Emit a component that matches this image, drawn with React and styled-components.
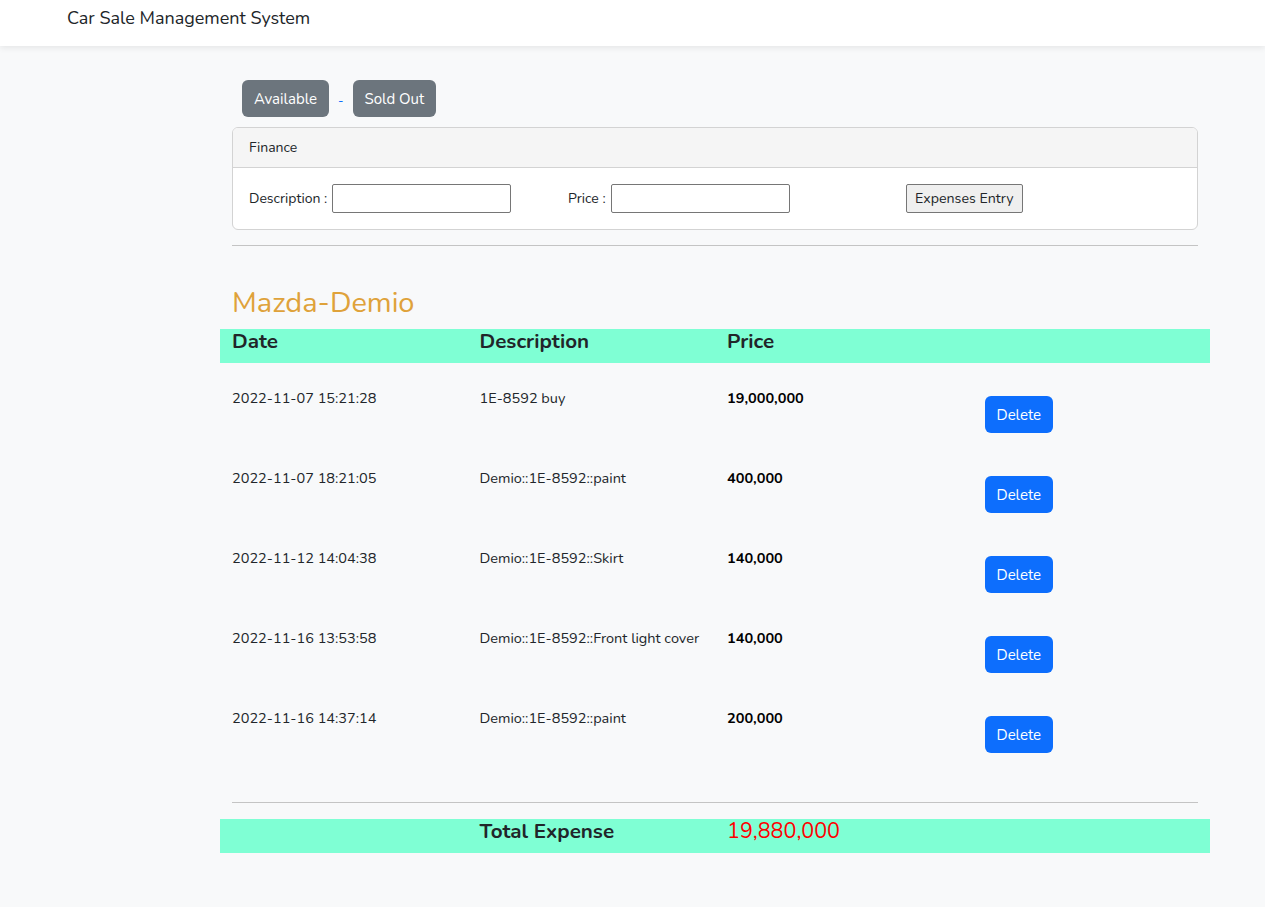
import styled, { createGlobalStyle } from "styled-components";

const GlobalStyle = createGlobalStyle`
  body {
    margin: 0;
    background: #f8f9fa;
    font-family: "Nunito", Lato, "Noto Sans", sans-serif;
    color: #212529;
  }
`;

const Navbar = styled.nav`
  height: 46px;
  background: #fff;
  box-shadow: 0 2px 6px rgba(0, 0, 0, 0.08);
  display: flex;
  align-items: center;
  padding-left: 67px;
`;

const Brand = styled.div`
  font-size: 18px;
  color: #212529;
  margin-top: -10px;
`;

const Container = styled.div`
  width: 990px;
  margin-left: 220px;
  padding-top: 34px;
`;

const Inner = styled.div`
  padding: 0 12px;
`;

const StatusBar = styled.div`
  display: flex;
  align-items: center;
  padding-left: 10px;
  height: 37px;
`;

const StatusButton = styled.button`
  height: 37px;
  padding: 0 12px;
  border: none;
  border-radius: 6px;
  background: #6c757d;
  color: #fff;
  font-family: inherit;
  font-size: 15px;
`;

const Dash = styled.span`
  color: #0d6efd;
  font-size: 13px;
  margin: 4px 9px 0 9px;
`;

const Card = styled.div`
  margin-top: 10px;
  border: 1px solid #d3d3d3;
  border-radius: 6px;
  background: #fff;
  overflow: hidden;
`;

const CardHeader = styled.div`
  height: 39px;
  display: flex;
  align-items: center;
  padding: 0 16px;
  background: #f5f5f5;
  border-bottom: 1px solid #d3d3d3;
  font-size: 14px;
`;

const CardBody = styled.div`
  height: 61px;
  display: flex;
  align-items: center;
  padding: 0 16px;
  font-size: 14px;
`;

const Field = styled.label`
  display: flex;
  align-items: center;
  width: ${(p) => p.w}px;
`;

const Input = styled.input`
  width: 179px;
  height: 29px;
  box-sizing: border-box;
  border: 1px solid #767676;
  border-radius: 2px;
  margin-left: 5px;
  background: #fff;
`;

const EntryButton = styled.button`
  height: 29px;
  padding: 0 8px;
  border: 1px solid #767676;
  border-radius: 2px;
  background: #efefef;
  font-family: inherit;
  font-size: 14.2px;
  color: #212529;
`;

const Rule = styled.hr`
  margin: ${(p) => p.m};
  border: none;
  border-top: 1px solid #c4c4c4;
`;

const CarTitle = styled.h2`
  margin: 37px 0 0;
  font-size: 29px;
  font-weight: 400;
  color: #dfa23a;
  line-height: 40px;
`;

const Band = styled.div`
  display: grid;
  grid-template-columns: repeat(4, 247.5px);
  height: 34px;
  background: #7fffd4;
  margin-top: ${(p) => p.mt || 0}px;
`;

const HeadCell = styled.div`
  padding: 0 12px;
  font-size: ${(p) => (p.light ? 21.5 : 20.6)}px;
  line-height: 24px;
  font-weight: ${(p) => (p.light ? 400 : 700)};
  color: ${(p) => p.color || "#212529"};
`;

const Row = styled.div`
  display: grid;
  grid-template-columns: repeat(4, 247.5px);
  height: 80px;
`;

const Cell = styled.div`
  padding: 25px 12px 0;
  font-size: 14.5px;
  font-weight: ${(p) => (p.bold ? 700 : 400)};
  color: ${(p) => (p.bold ? "#000" : "#212529")};
`;

const DeleteButton = styled.button`
  margin: 8px 0 0 10px;
  height: 37px;
  padding: 0 12px;
  border: none;
  border-radius: 6px;
  background: #0d6efd;
  color: #fff;
  font-family: inherit;
  font-size: 15px;
`;

const Footer = styled.div`
  height: 54px;
`;

const expenses = [
  { date: "2022-11-07 15:21:28", desc: "1E-8592 buy", price: "19,000,000" },
  { date: "2022-11-07 18:21:05", desc: "Demio::1E-8592::paint", price: "400,000" },
  { date: "2022-11-12 14:04:38", desc: "Demio::1E-8592::Skirt", price: "140,000" },
  { date: "2022-11-16 13:53:58", desc: "Demio::1E-8592::Front light cover", price: "140,000" },
  { date: "2022-11-16 14:37:14", desc: "Demio::1E-8592::paint", price: "200,000" },
];

const App = () => {
  return (
    <>
      <GlobalStyle />
      <Navbar>
        <Brand>Car Sale Management System</Brand>
      </Navbar>
      <Container>
        <Inner>
          <StatusBar>
            <StatusButton>Available</StatusButton>
            <Dash>-</Dash>
            <StatusButton>Sold Out</StatusButton>
          </StatusBar>
          <Card>
            <CardHeader>Finance</CardHeader>
            <CardBody>
              <Field w={319}>
                Description : <Input />
              </Field>
              <Field w={338}>
                Price : <Input />
              </Field>
              <EntryButton>Expenses Entry</EntryButton>
            </CardBody>
          </Card>
          <Rule m="15px 0 0" />
          <CarTitle>Mazda-Demio</CarTitle>
        </Inner>
        <Band mt={6}>
          <HeadCell>Date</HeadCell>
          <HeadCell>Description</HeadCell>
          <HeadCell>Price</HeadCell>
          <HeadCell />
        </Band>
        {expenses.map((e, i) => (
          <Row key={i}>
            <Cell>{e.date}</Cell>
            <Cell>{e.desc}</Cell>
            <Cell bold>{e.price}</Cell>
            <Cell>
              <DeleteButton>Delete</DeleteButton>
            </Cell>
          </Row>
        ))}
        <Inner>
          <Rule m="39px 0 0" />
        </Inner>
        <Band mt={16}>
          <HeadCell />
          <HeadCell>Total Expense</HeadCell>
          <HeadCell light color="#ff0000">19,880,000</HeadCell>
          <HeadCell />
        </Band>
        <Footer />
      </Container>
    </>
  );
};

export default App;
